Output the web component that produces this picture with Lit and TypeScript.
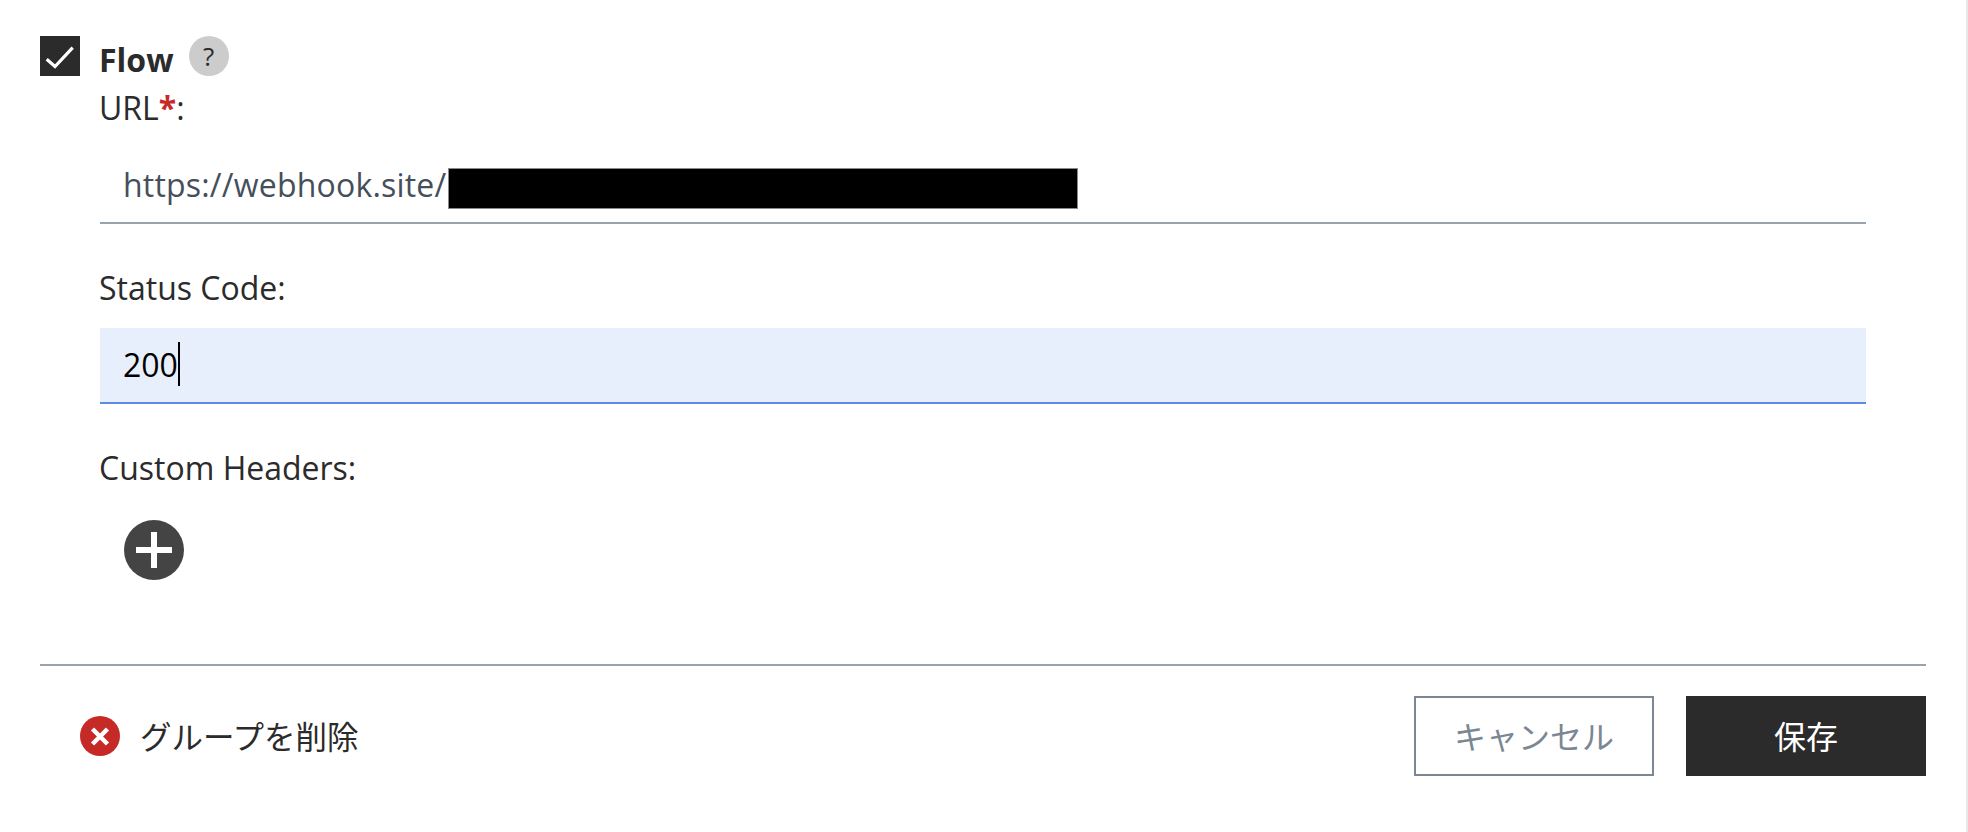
import { LitElement, html, css } from "lit";
import { customElement } from "lit/decorators.js";

@customElement("app-root")
export class AppRoot extends LitElement {
  static styles = css`
    :host {
      display: block;
      height: 832px;
      box-sizing: border-box;
      background: #fff;
      color: #2b2b2b;
      font-family: "Open Sans", "Noto Sans", "Noto Sans CJK JP", sans-serif;
      font-size: 32px;
      overflow: hidden;
      border-right: 2px solid #e8e8e8;
    }
    .page {
      display: flex;
      flex-direction: column;
      height: 832px;
      box-sizing: border-box;
      padding: 36px 40px 0 40px;
    }
    .head {
      display: flex;
      align-items: flex-start;
      height: 40px;
    }
    .check {
      width: 40px;
      height: 40px;
      background: #2b2b2b;
      flex: none;
    }
    .check svg {
      display: block;
    }
    .flow {
      margin-left: 19px;
      font-weight: 700;
      line-height: 40px;
      margin-top: 4px;
    }
    .help {
      margin-left: 15px;
      width: 40px;
      height: 40px;
      border-radius: 50%;
      background: #cccccc;
      display: flex;
      align-items: center;
      justify-content: center;
      font-size: 26px;
      color: #2b2b2b;
      line-height: 1;
      padding-bottom: 1px;
      box-sizing: border-box;
    }
    .fields {
      margin: 0 60px;
      display: flex;
      flex-direction: column;
    }
    .label {
      line-height: 40px;
      height: 40px;
      margin-top: 44px;
      text-indent: -1px;
    }
    .req {
      color: #c62a27;
      font-weight: 700;
    }
    .url-label {
      margin-top: 12px;
    }
    .input {
      height: 76px;
      margin-top: 20px;
      box-sizing: border-box;
      display: flex;
      align-items: center;
      padding: 0 0 2px 23px;
      border-bottom: 2px solid #98a3ae;
      color: #454f5b;
    }
    .url-text {
      letter-spacing: 0.2px;
    }
    .redact {
      width: 630px;
      height: 41px;
      box-sizing: border-box;
      border: 1px solid #8a8a8a;
      background: #000;
      flex: none;
      margin: 8px 0 0 2px;
    }
    .focus-input {
      background: #e8effc;
      border-bottom-color: #5f8ae4;
      color: #000;
    }
    .caret {
      width: 2px;
      height: 44px;
      background: #000;
      flex: none;
    }
    .add {
      margin: 32px 0 0 24px;
      width: 60px;
      height: 60px;
    }
    .spacer {
      flex: 0 0 auto;
      height: 84px;
    }
    .divider {
      height: 2px;
      background: #98a3ae;
    }
    .foot {
      display: flex;
      align-items: center;
      margin-top: 30px;
      padding-left: 40px;
    }
    .del {
      display: flex;
      align-items: center;
      gap: 20px;
      flex: 1;
      font-size: 31.5px;
    }
    .del span {
      position: relative;
      top: -1px;
    }
    .del svg {
      flex: none;
    }
    .btn {
      width: 240px;
      height: 80px;
      box-sizing: border-box;
      display: flex;
      align-items: center;
      justify-content: center;
      flex: none;
      padding-bottom: 2px;
    }
    .cancel {
      border: 2px solid #7b8794;
      color: #7b8794;
      background: #fff;
    }
    .save {
      margin-left: 32px;
      background: #2b2b2b;
      color: #fff;
    }
  `;

  render() {
    return html`
      <div class="page">
        <div class="head">
          <div class="check">
            <svg width="40" height="40" viewBox="0 0 40 40">
              <path d="M6.7 23.3 L15 30.5 L32.7 11.7" fill="none" stroke="#fff" stroke-width="3.2" />
            </svg>
          </div>
          <div class="flow">Flow</div>
          <div class="help">?</div>
        </div>
        <div class="fields">
          <div class="label url-label">URL<span class="req">*</span>:</div>
          <div class="input"><span class="url-text">https://webhook.site/</span><span class="redact"></span></div>
          <div class="label">Status Code:</div>
          <div class="input focus-input">200<span class="caret"></span></div>
          <div class="label">Custom Headers:</div>
          <svg class="add" viewBox="0 0 60 60">
            <circle cx="30" cy="30" r="30" fill="#444444" />
            <path d="M27 12h6v15h15v6H33v15h-6V33H12v-6h15z" fill="#fff" />
          </svg>
        </div>
        <div class="spacer"></div>
        <div class="divider"></div>
        <div class="foot">
          <div class="del">
            <svg width="40" height="40" viewBox="0 0 40 40">
              <circle cx="20" cy="20" r="20" fill="#c62a27" />
              <path d="M12.5 13 L27.5 28 M27.5 13 L12.5 28" stroke="#fff" stroke-width="4.5" fill="none" />
            </svg>
            <span>グループを削除</span>
          </div>
          <div class="btn cancel">キャンセル</div>
          <div class="btn save">保存</div>
        </div>
      </div>
    `;
  }
}
